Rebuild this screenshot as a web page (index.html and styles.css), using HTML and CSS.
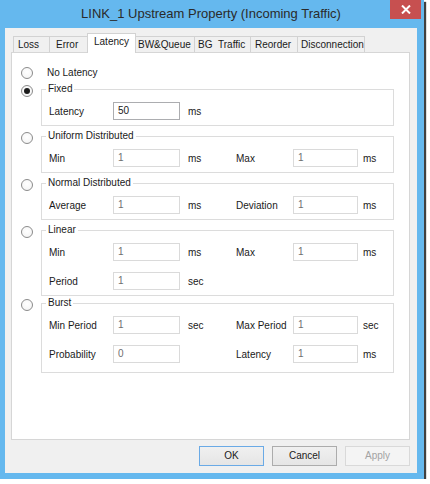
FILE: index.html
```html
<!DOCTYPE html>
<html>
<head>
<meta charset="utf-8">
<title>LINK_1 Upstream Property</title>
<link rel="stylesheet" href="styles.css">
</head>
<body>
<div class="window">
  <div class="titlebar">
    <div class="title">LINK_1 Upstream Property (Incoming Traffic)</div>
    <div class="close">
      <svg width="10" height="9" viewBox="0 0 10 9"><path d="M1 0.5 L9 8.5 M9 0.5 L1 8.5" stroke="#fff" stroke-width="2" fill="none"/></svg>
    </div>
  </div>
  <div class="client">
    <div class="tabs">
      <div class="tab t-loss">Loss</div>
      <div class="tab t-error">Error</div>
      <div class="tab t-latency selected">Latency</div>
      <div class="tab t-bw">BW&amp;Queue</div>
      <div class="tab t-bg">BG&nbsp;&nbsp;Traffic</div>
      <div class="tab t-reorder">Reorder</div>
      <div class="tab t-disc">Disconnection</div>
    </div>
    <div class="panel">
      <div class="option plain">
        <span class="radio"></span><span class="opt-label">No Latency</span>
      </div>

      <div class="option">
        <span class="radio checked"></span>
        <div class="group">
          <span class="legend">Fixed</span>
          <div class="row">
            <span class="lbl">Latency</span><span class="input active">50</span><span class="unit">ms</span>
          </div>
        </div>
      </div>

      <div class="option">
        <span class="radio"></span>
        <div class="group">
          <span class="legend">Uniform Distributed</span>
          <div class="row">
            <span class="lbl">Min</span><span class="input">1</span><span class="unit">ms</span>
            <span class="lbl">Max</span><span class="input">1</span><span class="unit unit2">ms</span>
          </div>
        </div>
      </div>

      <div class="option">
        <span class="radio"></span>
        <div class="group">
          <span class="legend">Normal Distributed</span>
          <div class="row">
            <span class="lbl">Average</span><span class="input">1</span><span class="unit">ms</span>
            <span class="lbl">Deviation</span><span class="input">1</span><span class="unit unit2">ms</span>
          </div>
        </div>
      </div>

      <div class="option">
        <span class="radio"></span>
        <div class="group">
          <span class="legend">Linear</span>
          <div class="row">
            <span class="lbl">Min</span><span class="input">1</span><span class="unit">ms</span>
            <span class="lbl">Max</span><span class="input">1</span><span class="unit unit2">ms</span>
          </div>
          <div class="row">
            <span class="lbl">Period</span><span class="input">1</span><span class="unit">sec</span>
          </div>
        </div>
      </div>

      <div class="option burst">
        <span class="radio"></span>
        <div class="group group-burst">
          <span class="legend">Burst</span>
          <div class="row">
            <span class="lbl">Min Period</span><span class="input">1</span><span class="unit">sec</span>
            <span class="lbl">Max Period</span><span class="input">1</span><span class="unit unit2">sec</span>
          </div>
          <div class="row">
            <span class="lbl">Probability</span><span class="input">0</span><span class="unit"></span>
            <span class="lbl">Latency</span><span class="input">1</span><span class="unit unit2">ms</span>
          </div>
        </div>
      </div>
    </div>
    <div class="buttons">
      <div class="btn default">OK</div>
      <div class="btn">Cancel</div>
      <div class="btn disabled">Apply</div>
    </div>
  </div>
</div>
</body>
</html>
```

FILE: styles.css
```css
* { box-sizing: border-box; }

body {
  margin: 0;
  background: #ffffff;
  font-family: "Liberation Sans", Arial, sans-serif;
  color: #1a1a1a;
}

.window {
  position: relative;
  width: 424px;
  height: 479px;
  background: #65b8ee;
  box-shadow: 2px 2px 1px rgba(30, 30, 30, 0.85);
}

.titlebar {
  height: 28px;
  padding-left: 5px;
}

.title {
  width: 412px;
  text-align: center;
  font-size: 13px;
  line-height: 27px;
  color: #2a2a2a;
}

.close {
  position: absolute;
  left: 390px;
  top: 0;
  width: 31px;
  height: 19px;
  background: #c75050;
  display: flex;
  align-items: center;
  justify-content: center;
}

.client {
  margin-left: 5px;
  width: 412px;
  height: 445px;
  background: #f0f0f0;
  padding: 5px 7px 7px 6px;
  display: flex;
  flex-direction: column;
}

/* Tabs */
.tabs {
  display: flex;
  align-items: flex-end;
  height: 19px;
  padding-left: 2px;
  position: relative;
  z-index: 1;
}

.tab {
  height: 16px;
  border: 1px solid #d2d2d2;
  border-bottom: none;
  background: #f0f0f0;
  font-size: 10px;
  line-height: 16px;
  padding-left: 4px;
  color: #1a1a1a;
  white-space: nowrap;
  overflow: hidden;
  margin-left: -1px;
}
.tab:first-child { margin-left: 0; }

.t-loss { width: 37px; }
.t-error { width: 39px; padding-left: 6px; }
.t-latency { width: 49px; padding-left: 6px; }
.t-bw { width: 60px; padding-left: 2px; }
.t-bg { width: 57px; padding-left: 3px; }
.t-reorder { width: 48px; }
.t-disc { width: 68px; padding-left: 3px; }

.tab.selected {
  height: 20px;
  margin-bottom: -1px;
  background: #ffffff;
  line-height: 16px;
  position: relative;
  z-index: 2;
}

/* Panel */
.panel {
  height: 388px;
  border: 1px solid #d6d6d6;
  background: #ffffff;
  padding: 13px 0 0 9px;
  display: flex;
  flex-direction: column;
  gap: 10px;
}

.option {
  display: flex;
  align-items: flex-start;
}

.option.plain {
  height: 13px;
  align-items: center;
}

.option.burst { margin-top: -3px; }

.radio {
  flex: none;
  width: 12px;
  height: 12px;
  border: 1px solid #8b8b8b;
  border-radius: 50%;
  background: radial-gradient(circle at 50% 40%, #ffffff 0%, #f2f2f2 100%);
  position: relative;
  margin-top: -4px;
}
.option.plain .radio { margin-top: 0; }

.radio.checked::after {
  content: "";
  position: absolute;
  left: 2px;
  top: 2px;
  width: 6px;
  height: 6px;
  border-radius: 50%;
  background: #1c1c1c;
}

.opt-label {
  margin-left: 14px;
  font-size: 10px;
  line-height: 13px;
}

.group {
  position: relative;
  margin-left: 8px;
  width: 353px;
  border: 1px solid #dcdcdc;
  padding: 12px 0 5px 7px;
  display: flex;
  flex-direction: column;
  gap: 11px;
}

.group-burst { padding-bottom: 9px; }

.legend {
  position: absolute;
  left: 4px;
  top: -7px;
  padding: 0 2px;
  background: #ffffff;
  font-size: 10px;
  line-height: 12px;
}

.row {
  display: grid;
  grid-template-columns: 64px 67px 56px 57px 65px auto;
  align-items: center;
  height: 18px;
  font-size: 10px;
}

.input {
  height: 18px;
  border: 1px solid #dadada;
  background: #ffffff;
  padding-left: 4px;
  line-height: 16px;
  color: #6f6f6f;
}

.input.active {
  border-color: #acadb0;
  color: #1a1a1a;
}

.unit { padding-left: 8px; }
.unit2 { padding-left: 5px; }

/* Buttons */
.buttons {
  margin-top: 6px;
  height: 20px;
  display: flex;
  justify-content: flex-end;
  gap: 8px;
}

.btn {
  width: 65px;
  height: 20px;
  border: 1px solid #acacac;
  background: linear-gradient(#f0f0f0, #e5e5e5);
  font-size: 10px;
  line-height: 18px;
  text-align: center;
  color: #1a1a1a;
}

.btn.default {
  border-color: #6aaae6;
}

.btn.disabled {
  border-color: #d9d9d9;
  background: #f4f4f4;
  color: #a3a3a3;
}
```
